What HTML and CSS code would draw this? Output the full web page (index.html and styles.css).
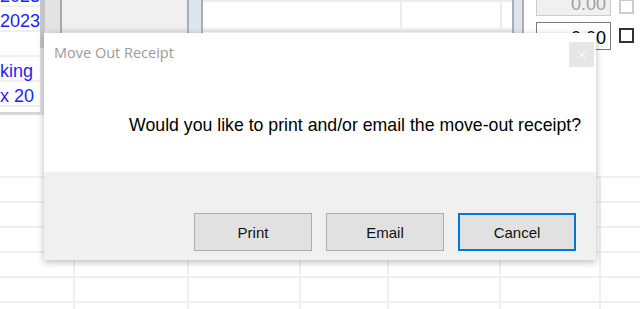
FILE: index.html
```html
<!DOCTYPE html>
<html lang="en">
<head>
    <meta charset="UTF-8">
    <meta name="viewport" content="width=device-width, initial-scale=1.0">
    <title>Move Out Receipt</title>
    <link rel="stylesheet" href="styles.css">
</head>
<body>
    <div class="form">
        <div class="top">
            <div class="list">
                <div class="list-inner">
                    <div class="cell">2023</div>
                    <div class="cell">2023</div>
                    <div class="cell"></div>
                    <div class="cell">king</div>
                    <div class="cell">x 20</div>
                </div>
            </div>
            <div class="vscroll"><div class="thumb"></div></div>
            <div class="panel"><div class="panel-head"></div></div>
            <div class="splitter"></div>
            <div class="sheet">
                <div class="sheet-head">
                    <div class="col"></div>
                    <div class="col"></div>
                    <div class="col"></div>
                </div>
            </div>
            <div class="splitter narrow"></div>
            <div class="side">
                <div class="field-row first">
                    <div class="amount disabled">0.00</div>
                    <div class="check disabled"></div>
                </div>
                <div class="field-row">
                    <div class="amount">0.00</div>
                    <div class="check"></div>
                </div>
            </div>
        </div>

        <div class="grid">
            <div class="row"><div></div><div></div><div></div><div></div><div></div><div></div><div></div></div>
            <div class="row"><div></div><div></div><div></div><div></div><div></div><div></div><div></div></div>
            <div class="row"><div></div><div></div><div></div><div></div><div></div><div></div><div></div></div>
            <div class="row"><div></div><div></div><div></div><div></div><div></div><div></div><div></div></div>
            <div class="row"><div></div><div></div><div></div><div></div><div></div><div></div><div></div></div>
            <div class="row"><div></div><div></div><div></div><div></div><div></div><div></div><div></div></div>
        </div>
    </div>

    <!-- message box over the form -->
    <div class="dialog">
        <div class="dialog-body">
            <div class="dialog-title">
                <span>Move Out Receipt</span>
                <div class="close">
                    <svg width="8" height="8" viewBox="0 0 8 8">
                        <path d="M0.5 0.5 L7.5 7.5 M7.5 0.5 L0.5 7.5" stroke="#fff" stroke-width="1"/>
                    </svg>
                </div>
            </div>
            <p class="message">Would you like to print and/or email the move-out receipt?</p>
        </div>
        <div class="dialog-buttons">
            <button>Print</button>
            <button>Email</button>
            <button class="focused">Cancel</button>
        </div>
    </div>
</body>
</html>
```

FILE: styles.css
```css
body {
    margin: 0;
    width: 640px;
    height: 309px;
    overflow: hidden;
    background-color: #fff;
    font-family: "Liberation Sans", Arial, sans-serif;
    position: relative;
}

/* form behind the dialog */
.form {
    height: 309px;
    overflow: hidden;
}
.top {
    display: flex;
    height: 115px;
}
.list {
    width: 40px;
    height: 115px;
    box-sizing: border-box;
    overflow: hidden;
    border-bottom: 3px solid #d6d6d6;
}
.list-inner {
    margin-top: -18px;
}
.cell {
    height: 23px;
    line-height: 28px;
    border-bottom: 2px solid #efefef;
    color: #1e1eff;
    font-size: 18px;
    text-align: right;
    padding-right: 7px;
    white-space: nowrap;
}
.vscroll {
    width: 20px;
    background-color: #e3e3e3;
}
.thumb {
    width: 5px;
    height: 48px;
    background-color: #c6c6c6;
}
.panel {
    width: 125px;
    background-color: #f0f0f0;
    border-left: 2px solid #a9a9a9;
}
.panel-head {
    height: 32px;
    background: linear-gradient(#f0f0f0 0, #f0f0f0 26px, #e0e0e0 32px);
}
.splitter {
    width: 12px;
    background-color: #dfe5ee;
    border-left: 2px solid #a8adb6;
    border-right: 2px solid #a8adb6;
}
.splitter.narrow {
    width: 8px;
}
.sheet {
    width: 309px;
}
.sheet-head {
    display: grid;
    grid-template-columns: 197px 100px 12px;
    height: 32px;
    box-sizing: border-box;
    border-top: 2px solid #ececec;
    background: linear-gradient(#fff 0, #fff 24px, #e4e4e4 30px);
}
.col + .col {
    border-left: 2px solid #ececec;
}
.side {
    flex: 1;
    padding-left: 12px;
    margin-top: -12px;
}
.field-row {
    display: flex;
    gap: 8px;
    margin-bottom: 6px;
}
.amount {
    width: 75px;
    height: 28px;
    box-sizing: border-box;
    border: 1px solid #7a7a7a;
    background-color: #fff;
    font-size: 18px;
    line-height: 30px;
    text-align: right;
    padding-right: 4px;
}
.amount.disabled {
    border-color: #cccccc;
    background-color: #f0f0f0;
    color: #a0a0a0;
}
.check {
    width: 15px;
    height: 15px;
    box-sizing: border-box;
    border: 2px solid #333;
    margin-top: 6px;
    background-color: #fff;
}
.check.disabled {
    border-color: #cccccc;
    margin-top: 11px;
}

.grid {
    padding-top: 61px;
}
.row {
    display: grid;
    grid-template-columns: 73px 114px 112px 88px 112px 100px 1fr;
    height: 25px;
    box-sizing: border-box;
    border-top: 2px solid #efefef;
}
.row div + div {
    border-left: 2px solid #efefef;
}

/* dialog */
.dialog {
    position: absolute;
    left: 44px;
    top: 33px;
    width: 552px;
    height: 227px;
    background-color: #f0f0f0;
    box-shadow: 0 2px 7px rgba(0,0,0,0.28);
    display: flex;
    flex-direction: column;
}
.dialog-body {
    height: 139px;
    background-color: #fff;
}
.dialog-title {
    display: flex;
    justify-content: space-between;
    padding: 9px 2px 0 10px;
    font-family: "Open Sans", "Noto Sans", sans-serif;
    font-size: 14.5px;
    color: #9b9b9b;
}
.dialog-title span {
    line-height: 22px;
}
.close {
    width: 25px;
    height: 25px;
    background-color: #e6e6e6;
    display: flex;
    align-items: center;
    justify-content: center;
}
.message {
    margin: 0;
    padding: 48px 15px 0 0;
    text-align: right;
    font-size: 17.7px;
    color: #000;
}
.dialog-buttons {
    display: flex;
    justify-content: flex-end;
    gap: 14px;
    padding: 41px 20px 0 0;
}
button {
    width: 118px;
    height: 38px;
    background-color: #e1e1e1;
    border: 1px solid #adadad;
    font-family: "Liberation Sans", Arial, sans-serif;
    font-size: 15px;
    color: #111;
    padding: 0;
}
button.focused {
    border: 2px solid #0078d7;
}
```
